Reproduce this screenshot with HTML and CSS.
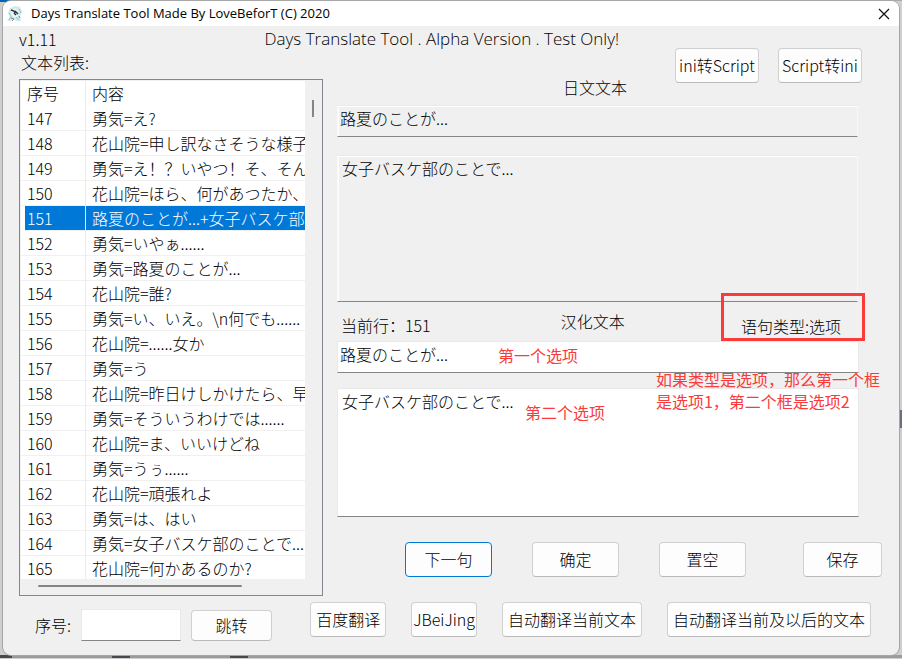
FILE: index.html
```html
<!DOCTYPE html>
<html lang="zh-CN">
<head>
<meta charset="utf-8">
<title>Days Translate Tool</title>
<link rel="stylesheet" href="styles.css">
</head>
<body>
<div class="window">
  <header class="titlebar">
    <svg class="app-icon" viewBox="0 0 16 16" aria-hidden="true">
      <path d="M3 2l5-2 5 1 2 5-2 4 1 5H9l-2-2-4 2H0l3-4-2-4z" fill="#cdeaf0"/>
      <path d="M4 5l4-3 4 3-1 5-3 2-4-3z" fill="#eef3f4"/>
      <path d="M4 4l3 1 1 2M8 5l3 3M7 7l2 2" stroke="#27363c" stroke-width="1.5" fill="none"/>
      <path d="M2 7l2 3-2 4M9 11l3 3M12 3l2 4" stroke="#93c5ce" fill="none"/>
      <path d="M4 12l3 1-2 2M12 10l1 2" stroke="#8a8178" fill="none"/>
    </svg>
    <h1 class="titlebar-text">Days Translate Tool Made By LoveBeforT (C) 2020</h1>
    <button class="close" type="button" aria-label="Close">
      <svg viewBox="0 0 12 12" width="12" height="12"><path d="M1 1l10 10M11 1L1 11" stroke="#111" stroke-width="1.2" fill="none"/></svg>
    </button>
  </header>
  <div class="banner">
    <span>v1.11</span>
    <span class="banner-title">Days Translate Tool . Alpha Version . Test Only!</span>
  </div>
  <main class="workspace">
    <section class="list-pane">
      <h2 class="list-label">文本列表:</h2>
      <div class="list">
        <div class="list-view">
          <table class="lines" lang="ja">
            <thead lang="zh-CN"><tr><th class="num">序号</th><th>内容</th></tr></thead>
            <tbody>
              <tr><td>147</td><td>勇気=え?</td></tr>
              <tr><td>148</td><td>花山院=申し訳なさそうな様子</td></tr>
              <tr><td>149</td><td class="zh-marks" lang="zh-CN">勇気=え！？いやつ！そ、そん</td></tr>
              <tr><td>150</td><td>花山院=ほら、何があつたか、</td></tr>
              <tr class="selected"><td>151</td><td>路夏のことが...+女子バスケ部</td></tr>
              <tr><td>152</td><td>勇気=いやぁ......</td></tr>
              <tr><td>153</td><td>勇気=路夏のことが...</td></tr>
              <tr><td>154</td><td>花山院=誰?</td></tr>
              <tr><td>155</td><td>勇気=い、いえ。\n何でも......</td></tr>
              <tr><td>156</td><td>花山院=......女か</td></tr>
              <tr><td>157</td><td>勇気=う</td></tr>
              <tr><td>158</td><td>花山院=昨日けしかけたら、早</td></tr>
              <tr><td>159</td><td>勇気=そういうわけでは......</td></tr>
              <tr><td>160</td><td>花山院=ま、いいけどね</td></tr>
              <tr><td>161</td><td>勇気=うぅ......</td></tr>
              <tr><td>162</td><td>花山院=頑張れよ</td></tr>
              <tr><td>163</td><td>勇気=は、はい</td></tr>
              <tr><td>164</td><td>勇気=女子バスケ部のことで...</td></tr>
              <tr><td>165</td><td>花山院=何かあるのか?</td></tr>
            </tbody>
          </table>
        </div>
        <div class="track-y"><div class="thumb-y"></div></div>
        <div class="track-x"><div class="thumb-x"></div></div>
      </div>
    </section>
    <section class="editor">
      <div class="toolbar">
        <label class="toolbar-label" for="source-1">日文文本</label>
        <button class="btn" type="button">ini转Script</button>
        <button class="btn" type="button">Script转ini</button>
      </div>
      <div class="fields">
        <input class="field line source" id="source-1" lang="ja" value="路夏のことが..." readonly>
        <textarea class="field area source" lang="ja" aria-label="日文文本" readonly>女子バスケ部のことで...</textarea>
      </div>
      <div class="status">
        <span class="current">当前行：151</span>
        <label class="target-label" for="target-1">汉化文本</label>
        <span class="kind">语句类型:选项</span>
      </div>
      <div class="fields">
        <input class="field line" id="target-1" lang="ja" value="路夏のことが...">
        <textarea class="field area short" lang="ja" aria-label="汉化文本">女子バスケ部のことで...</textarea>
        <span class="note note-first">第一个选项</span>
        <span class="note note-second">第二个选项</span>
        <p class="note note-kind">如果类型是选项，那么第一个框<br>是选项1，第二个框是选项2</p>
      </div>
      <div class="actions">
        <button class="btn wide primary" type="button">下一句</button>
        <button class="btn wide" type="button">确定</button>
        <button class="btn wide" type="button">置空</button>
        <button class="btn save" type="button">保存</button>
      </div>
    </section>
  </main>
  <footer class="bottom">
    <form class="jump">
      <label for="jump-to">序号:</label>
      <input class="field jump-field" id="jump-to">
      <button class="btn jump-btn" type="button">跳转</button>
    </form>
    <div class="translate">
      <button class="btn" type="button">百度翻译</button>
      <button class="btn compact" type="button">JBeiJing</button>
      <button class="btn" type="button">自动翻译当前文本</button>
      <button class="btn" type="button">自动翻译当前及以后的文本</button>
    </div>
  </footer>
</div>
</body>
</html>
```
FILE: styles.css
```css
* { box-sizing: border-box; }

body {
  margin: 0;
  padding: 1px 3px 3px;
  background:
    linear-gradient(90deg, #46494d 12px, transparent 12px 112px, #46494d 112px 130px, transparent 130px 230px, #46494d 230px 248px, transparent 248px) 0 100% / 100% 3px no-repeat,
    linear-gradient(#0067b4, #0067b4) 0 0 / 15px 2px no-repeat,
    linear-gradient(#6b6e80, #6b6e80) 100% 410px / 3px 18px no-repeat,
    linear-gradient(#9b9b9b, #9b9b9b) 0 100% / 100% 3px no-repeat,
    linear-gradient(#a9a9a9, #a9a9a9) 0 0 / 100% 1px no-repeat,
    #cfcfcf;
  color: #000;
  font: 300 16px/20px "Noto Sans CJK SC", sans-serif;
}

:lang(ja) { font-family: "Noto Sans CJK JP", sans-serif; }

.window {
  overflow: hidden;
  padding-bottom: 14px;
  background: #f0f0f0;
  border-radius: 8px;
  box-shadow: 0 0 0 1px #a6a6a6;
}

.titlebar {
  display: flex;
  align-items: center;
  height: 25px;
  padding: 0 9px 0 4px;
  background: #fff;
}
.app-icon { width: 16px; height: 16px; margin-right: 8px; }
.titlebar-text {
  margin: 0 0 2px;
  color: #000;
  font: 400 13px/16px "Open Sans", sans-serif;
}
.close {
  display: flex;
  margin-left: auto;
  padding: 0;
  border: 0;
  background: none;
}

.banner {
  display: flex;
  height: 22px;
  padding: 3px 16px 0;
}
.banner-title {
  margin-left: 208px;
  font-family: "Open Sans", sans-serif;
  font-size: 17px;
}

.workspace {
  display: grid;
  grid-template-columns: 304px 1fr;
  gap: 14px;
  padding: 0 17px 0 16px;
}

.list-label {
  margin: 0;
  padding: 4px 2px 7px;
  font-size: 16px;
  font-weight: 300;
  line-height: 20px;
}
.list {
  display: grid;
  grid-template: 498px 1fr / 1fr 16px;
  height: 517px;
  padding: 1px;
  border: 1px solid #828790;
}
.list-view { overflow: hidden; background: #fff; }
.lines {
  width: 100%;
  table-layout: fixed;
  border-collapse: separate;
  border-spacing: 0;
}
.lines th,
.lines td {
  height: 25px;
  padding: 0 0 0 6px;
  overflow: hidden;
  border-bottom: 1px solid #f0f0f0;
  font-weight: 300;
  line-height: 24px;
  text-align: left;
  white-space: nowrap;
}
.lines th { border-bottom-color: #fff; }
.lines th:first-child,
.lines td:first-child { border-right: 1px solid #ececec; }
.lines .num { width: 65px; }
.lines .zh-marks { font-family: "Noto Sans CJK SC", sans-serif; }
.selected { background: #0078d7; color: #fff; }
.lines .selected td:first-child { padding-left: 2px; border-left: 4px solid #fff; }
.track-x { grid-column: 1 / -1; padding: 6px 0 0 17px; }
.thumb-x { width: 204px; height: 2px; border-radius: 1px; background: #858585; }
.track-y { padding: 19px 0 0 7px; }
.thumb-y { width: 2px; height: 17px; background: #858585; }

.btn {
  height: 35px;
  padding: 0 0 1px;
  border: 1px solid #d0d0d0;
  border-bottom-color: #bababa;
  border-radius: 4px;
  background: #fdfdfd;
  color: inherit;
  font: inherit;
  white-space: nowrap;
}
.primary { border-color: #0078d4; }

.toolbar {
  display: flex;
  gap: 19px;
  height: 50px;
  padding-right: 20px;
}
.toolbar .btn { width: 84px; }
.toolbar-label { align-self: flex-end; margin: 0 auto 1px 226px; }

.fields {
  position: relative;
  display: flex;
  flex-direction: column;
  gap: 15px;
  padding: 0 23px 0 0;
}
.toolbar + .fields { gap: 18px; padding: 7px 24px 0 0; }
.field {
  width: 100%;
  margin: 0;
  border: 1px solid #e9e9e9;
  border-bottom-color: #858585;
  border-radius: 0;
  background: #fff;
  color: #000;
  font-size: 16px;
  font-weight: 300;
  font-family: inherit;
  line-height: 20px;
}
.field:lang(ja) { font-family: "Noto Sans CJK JP", sans-serif; }
.line { height: 32px; padding: 0 2px 6px; }
.area { display: block; height: 147px; padding: 2px 4px; resize: none; overflow: hidden; }
.short { height: 129px; }
.source {
  border-color: #e9e9e9 #f8f8f8 #858585;
  background: #f0f0f0;
  box-shadow: inset 0 1px #fff, inset 1px 0 #fff;
}

.status {
  position: relative;
  z-index: 1;
  display: flex;
  align-items: flex-start;
  height: 39px;
  padding: 9px 17px 0 4px;
}
.current { padding-top: 4px; }
.target-label { margin-left: 130px; }
.kind {
  height: 48px;
  margin: -18px 0 0 auto;
  padding: 20px 21px 0 17px;
  border: 3px solid #fb3a3a;
}

.note {
  position: absolute;
  margin: 0;
  color: #fb3a3a;
  font-weight: 400;
  line-height: 22px;
  white-space: nowrap;
}
.note-first { top: 3px; left: 161px; }
.note-second { top: 60px; left: 188px; }
.note-kind { top: 27px; right: 2px; }

.actions {
  display: flex;
  gap: 40px;
  padding: 25px 0 0 68px;
}
.wide { width: 87px; }
.save { width: 79px; margin-left: auto; }

.bottom {
  display: flex;
  justify-content: space-between;
  margin-top: 6px;
  padding: 0 28px 0 32px;
}
.jump { display: flex; align-items: flex-end; gap: 10px; padding-top: 7px; }
.jump label { align-self: center; }
.jump-field { width: 100px; height: 32px; }
.jump-btn { width: 81px; height: 31px; }
.translate { display: flex; align-items: flex-start; gap: 25px; }
.translate .btn { padding: 0 5px 1px; }
.translate .compact { padding: 0 1px 1px; }
```
